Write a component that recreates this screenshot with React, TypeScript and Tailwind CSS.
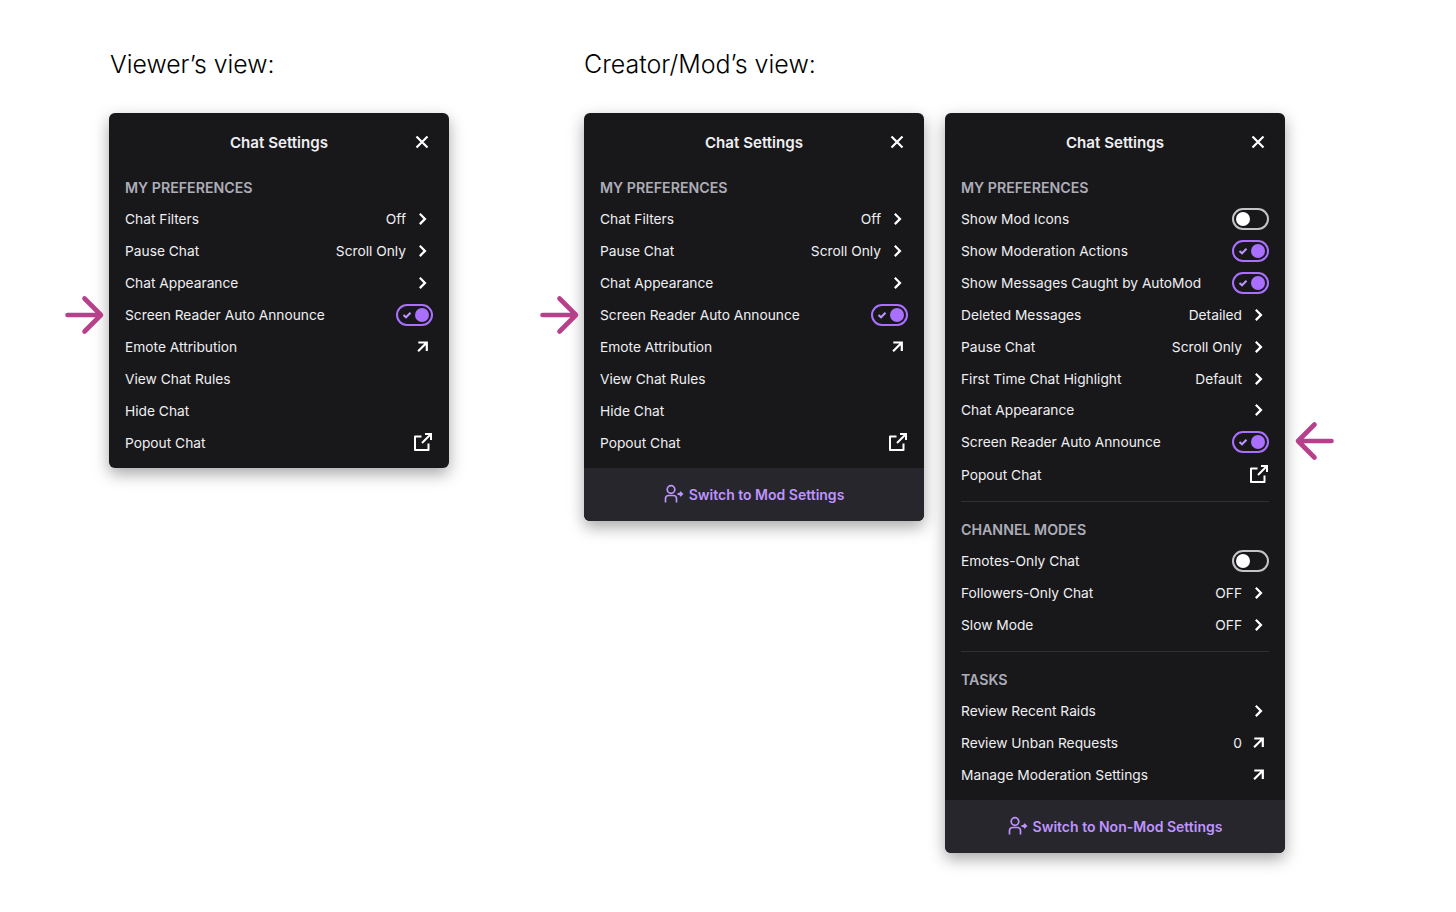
import React from 'react';

const Chevron = () => (
  <svg width="20" height="20" viewBox="0 0 20 20" fill="none" stroke="white" strokeWidth="2.2">
    <path d="M6.8 4.7 L12 9.9 L6.8 15.1" />
  </svg>
);

const Outward = () => (
  <svg width="20" height="20" viewBox="0 0 20 20" fill="none" stroke="white" strokeWidth="2.2">
    <path d="M5.3 5.5 H13.8 V14 M13.6 5.7 L5.1 14.2" />
  </svg>
);

const Popout = () => (
  <svg width="20" height="20" viewBox="0 0 20 20" fill="none" stroke="white" strokeWidth="2">
    <path d="M8.5 3.5 H2 V17 H15.5 V10.5" strokeLinejoin="round" />
    <path d="M12 1 H18 V7 M17.7 1.3 L9 10" />
  </svg>
);

const Toggle = ({ on }: { on?: boolean }) =>
  on ? (
    <div className="flex h-[22px] w-[37px] items-center justify-between rounded-full border-2 border-[#a970ff] pl-[4px] pr-[2px]">
      <svg width="10" height="10" viewBox="0 0 10 10" fill="none" stroke="#bf94ff" strokeWidth="2">
        <path d="M1.5 5 L4 7.3 L8.5 2.8" />
      </svg>
      <div className="h-[14px] w-[14px] rounded-full bg-[#a970ff]" />
    </div>
  ) : (
    <div className="flex h-[22px] w-[37px] items-center rounded-full border-2 border-[#c4c4c8] pl-[2px]">
      <div className="h-[14px] w-[14px] rounded-full bg-white" />
    </div>
  );

type Kind = 'chevron' | 'outward' | 'popout' | 'on' | 'off' | 'none';

const Row = ({ label, value, kind = 'none', className = '' }: { label: string; value?: string; kind?: Kind; className?: string }) => (
  <div className={`flex h-8 items-center justify-between text-[13.75px] text-[#efeff1] ${className}`}>
    <span className="pt-px">{label}</span>
    <div className="flex items-center gap-[7px]">
      {value && <span className="pt-px">{value}</span>}
      {kind === 'chevron' && <Chevron />}
      {kind === 'outward' && <Outward />}
      {kind === 'popout' && <Popout />}
      {kind === 'on' && <Toggle on />}
      {kind === 'off' && <Toggle />}
    </div>
  </div>
);

const Heading = ({ children }: { children: React.ReactNode }) => (
  <div className="flex h-[30px] items-center pb-px text-[14.2px] font-semibold text-[#adadb8]">{children}</div>
);

const Divider = ({ className }: { className: string }) => <div className={`h-px bg-[#2f2f35] ${className}`} />;

const Footer = ({ label }: { label: string }) => (
  <div className="flex h-[53px] items-center justify-center gap-[5px] bg-[#26262c] pb-px text-[14px] font-semibold text-[#bf94ff]">
    <svg width="20" height="20" viewBox="0 0 20 20" fill="none" stroke="#bf94ff" strokeWidth="1.7">
      <circle cx="7" cy="5.5" r="3.8" />
      <path d="M1.5 18.5 V14.5 A3 3 0 0 1 4.5 11.5 H9.5 A3 3 0 0 1 12.5 14.5 V18.5" />
      <path d="M13.5 10 H18 M16 7.8 L18.2 10 L16 12.2" strokeWidth="1.8" />
    </svg>
    <span>{label}</span>
  </div>
);

const Panel = ({ children, footer }: { children: React.ReactNode; footer?: string }) => (
  <div className="relative w-[340px] self-start rounded-[6px] bg-[#18181b] shadow-[0_6px_16px_rgba(0,0,0,0.35)]">
    <div className="relative flex h-[60px] items-center justify-center text-[15.1px] font-semibold text-[#efeff1]">
      Chat Settings
      <svg className="absolute right-[17px] top-[19px]" width="20" height="20" viewBox="0 0 20 20" fill="none" stroke="white" strokeWidth="2.2">
        <path d="M4.5 4.5 L15.5 15.5 M15.5 4.5 L4.5 15.5" />
      </svg>
    </div>
    <div className="px-4 pb-[9px]">{children}</div>
    {footer && (
      <div className="overflow-hidden rounded-b-[6px]">
        <Footer label={footer} />
      </div>
    )}
  </div>
);

const Pointer = ({ className, flip }: { className: string; flip?: boolean }) => (
  <svg
    className={`absolute ${className}`}
    width="42"
    height="40"
    viewBox="0 0 42 40"
    fill="none"
    stroke="#b8408a"
    strokeWidth="4.6"
    strokeLinecap="round"
    strokeLinejoin="round"
    transform={flip ? 'scale(-1 1)' : undefined}
  >
    <path d="M4.5 20 H38 M21.5 3.5 L38 20 L21.5 36.5" />
  </svg>
);

const ViewerRows = () => (
  <>
    <Heading>MY PREFERENCES</Heading>
    <Row label="Chat Filters" value="Off" kind="chevron" />
    <Row label="Pause Chat" value="Scroll Only" kind="chevron" />
    <Row label="Chat Appearance" kind="chevron" />
    <Row label="Screen Reader Auto Announce" kind="on" />
    <Row label="Emote Attribution" kind="outward" />
    <Row label="View Chat Rules" />
    <Row label="Hide Chat" />
    <Row label="Popout Chat" kind="popout" />
  </>
);

export default function App() {
  return (
    <div className="flex min-h-[912px] bg-white pl-[109px] pt-[47px] font-['Inter',sans-serif]">
      <div className="w-[340px]">
        <h1 className="h-[66px] pl-px text-[24.8px] leading-[35px] font-light text-black">Viewer’s view:</h1>
        <Panel>
          <Pointer className="left-[-46px] top-[182px]" />
          <ViewerRows />
        </Panel>
      </div>
      <div className="ml-[135px]">
        <h1 className="h-[66px] text-[25px] leading-[35px] font-light text-black">Creator/Mod’s view:</h1>
        <div className="flex gap-[21px]">
          <Panel footer="Switch to Mod Settings">
            <Pointer className="left-[-46px] top-[182px]" />
            <ViewerRows />
          </Panel>
          <Panel footer="Switch to Non-Mod Settings">
            <Pointer className="right-[-51px] top-[308px]" flip />
            <Heading>MY PREFERENCES</Heading>
            <Row label="Show Mod Icons" kind="off" />
            <Row label="Show Moderation Actions" kind="on" />
            <Row label="Show Messages Caught by AutoMod" kind="on" />
            <Row label="Deleted Messages" value="Detailed" kind="chevron" />
            <Row label="Pause Chat" value="Scroll Only" kind="chevron" />
            <Row label="First Time Chat Highlight" value="Default" kind="chevron" />
            <Row label="Chat Appearance" kind="chevron" className="-mt-px" />
            <Row label="Screen Reader Auto Announce" kind="on" />
            <Row label="Popout Chat" kind="popout" className="mt-px" />
            <Divider className="mt-[10px] mb-[13px]" />
            <Heading>CHANNEL MODES</Heading>
            <Row label="Emotes-Only Chat" kind="off" />
            <Row label="Followers-Only Chat" value="OFF" kind="chevron" />
            <Row label="Slow Mode" value="OFF" kind="chevron" />
            <Divider className="mt-[10px] mb-[13px]" />
            <Heading>TASKS</Heading>
            <Row label="Review Recent Raids" kind="chevron" />
            <Row label="Review Unban Requests" value="0" kind="outward" />
            <Row label="Manage Moderation Settings" kind="outward" />
          </Panel>
        </div>
      </div>
    </div>
  );
}
